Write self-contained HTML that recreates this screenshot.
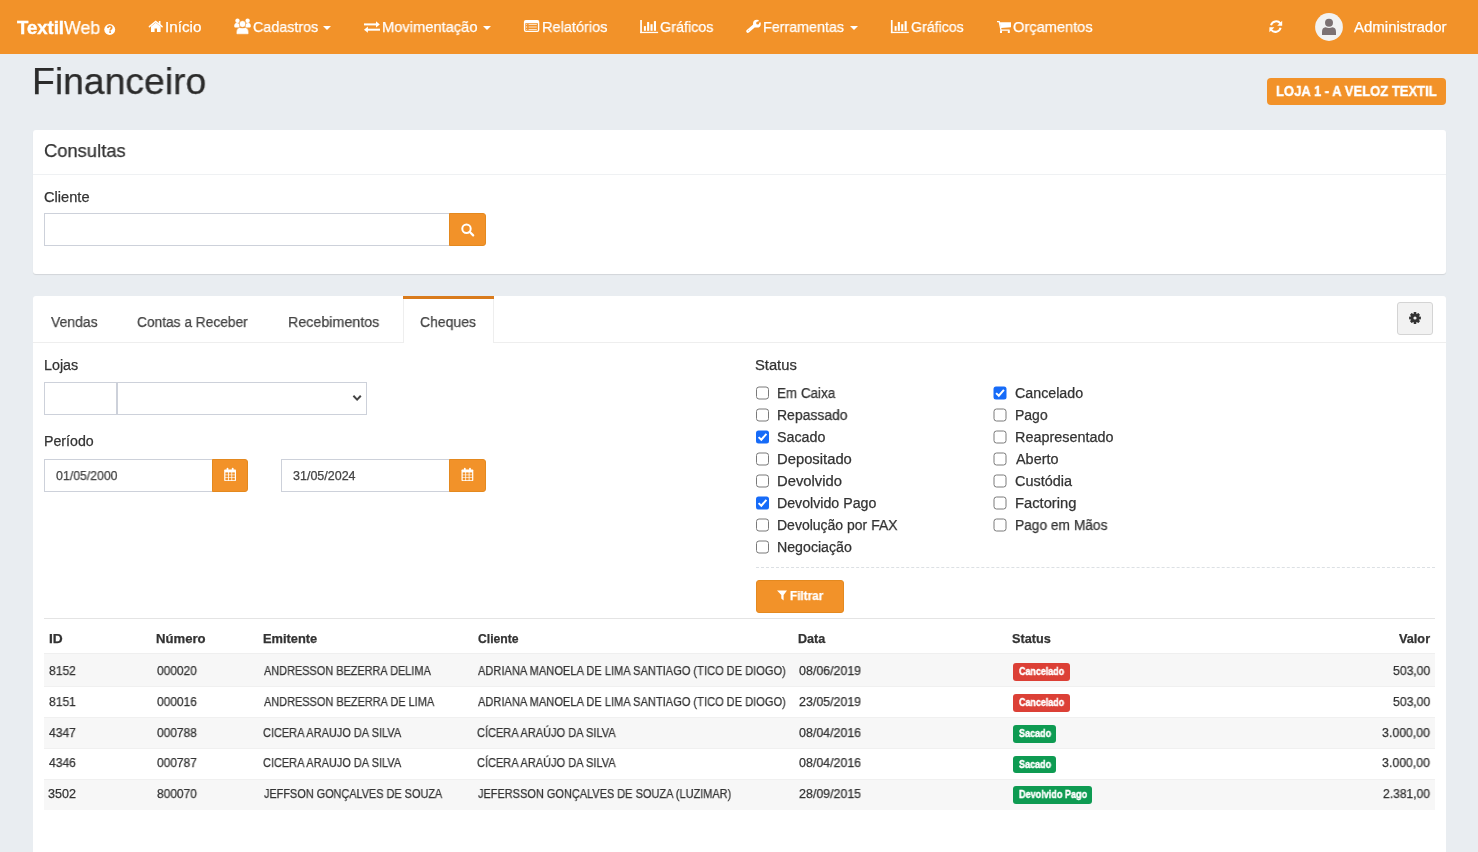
<!DOCTYPE html>
<html><head><meta charset="utf-8"><title>Financeiro</title>
<style>
html,body{margin:0;padding:0}
body{width:1478px;height:852px;overflow:hidden;position:relative;background:#E9EDF1;font-family:"Liberation Sans",sans-serif}
.t{position:absolute;line-height:1;white-space:pre;transform-origin:0 0;font-family:"Liberation Sans",sans-serif;will-change:transform;-webkit-text-stroke:0.25px currentColor}
.b{position:absolute;box-sizing:border-box}
svg{position:absolute;overflow:visible}

</style></head>
<body>
<!-- navbar -->
<div class="b" style="left:0;top:0;width:1478px;height:54px;background:#F29229"></div>
<!-- LOJA badge -->
<div class="b" style="left:1267px;top:78px;width:179px;height:27px;background:#F29229;border-radius:4px"></div>
<!-- panel 1 -->
<div class="b" style="left:33px;top:130px;width:1413px;height:144px;background:#fff;border-radius:3px;box-shadow:0 1px 1px rgba(0,0,0,0.1)"></div>
<div class="b" style="left:33px;top:174px;width:1413px;height:1px;background:#EFF1F3"></div>
<!-- cliente input -->
<div class="b" style="left:44px;top:213px;width:406px;height:33px;border:1px solid #CDD1DA;background:#fff"></div>
<div class="b" style="left:449px;top:213px;width:37px;height:33px;background:#F29229;border:1px solid #E4891F;border-radius:0 3px 3px 0"></div>
<!-- panel 2 -->
<div class="b" style="left:33px;top:296px;width:1413px;height:600px;background:#fff;border-radius:3px"></div>
<div class="b" style="left:33px;top:342px;width:1413px;height:1px;background:#EEEEEE"></div>
<!-- active tab -->
<div class="b" style="left:403px;top:296px;width:91px;height:47px;background:#fff;border-left:1px solid #EEE;border-right:1px solid #EEE"></div>
<div class="b" style="left:403px;top:296px;width:91px;height:3px;background:#D97B1C"></div>
<!-- gear button -->
<div class="b" style="left:1397px;top:302px;width:36px;height:33px;background:#F2F2F2;border:1px solid #D4D4D4;border-radius:3px"></div>
<!-- lojas inputs -->
<div class="b" style="left:44px;top:382px;width:73px;height:33px;border:1px solid #CDD1DA;background:#fff"></div>
<div class="b" style="left:117px;top:382px;width:250px;height:33px;border:1px solid #CDD1DA;background:#fff"></div>
<!-- date inputs -->
<div class="b" style="left:44px;top:459px;width:169px;height:33px;border:1px solid #CDD1DA;background:#fff"></div>
<div class="b" style="left:212px;top:459px;width:36px;height:33px;background:#F29229;border:1px solid #E4891F;border-radius:0 3px 3px 0"></div>
<div class="b" style="left:281px;top:459px;width:169px;height:33px;border:1px solid #CDD1DA;background:#fff"></div>
<div class="b" style="left:449px;top:459px;width:37px;height:33px;background:#F29229;border:1px solid #E4891F;border-radius:0 3px 3px 0"></div>
<!-- dashed line -->
<div class="b" style="left:756px;top:567px;width:679px;height:1px;border-top:1px dashed #DCE0E4"></div>
<!-- filtrar -->
<div class="b" style="left:756px;top:580px;width:88px;height:33px;background:#F29229;border:1px solid #E4891F;border-radius:3px"></div>
<!-- table -->
<div class="b" style="left:44px;top:618px;width:1391px;height:1px;background:#E4E4E4"></div>
<div class="b" style="left:44px;top:653px;width:1391px;height:1px;background:#EFEFEF"></div>
<div class="b" style="left:44px;top:654px;width:1391px;height:32px;background:#F7F7F7"></div>
<div class="b" style="left:44px;top:686px;width:1391px;height:1px;background:#F0F0F0"></div>
<div class="b" style="left:44px;top:717px;width:1391px;height:31px;background:#F7F7F7;border-top:1px solid #F0F0F0"></div>
<div class="b" style="left:44px;top:748px;width:1391px;height:1px;background:#F0F0F0"></div>
<div class="b" style="left:44px;top:779px;width:1391px;height:31px;background:#F7F7F7;border-top:1px solid #F0F0F0"></div>
<!-- badges -->
<div class="b" style="left:1013px;top:663px;width:57px;height:18px;background:#DC4036;border-radius:3px"></div>
<div class="b" style="left:1013px;top:694px;width:57px;height:18px;background:#DC4036;border-radius:3px"></div>
<div class="b" style="left:1013px;top:725px;width:43px;height:18px;background:#0E9B52;border-radius:3px"></div>
<div class="b" style="left:1013px;top:756px;width:43px;height:17px;background:#0E9B52;border-radius:3px"></div>
<div class="b" style="left:1013px;top:786px;width:79px;height:18px;background:#0E9B52;border-radius:3px"></div>
<svg width="1478" height="852" style="left:0;top:0" viewBox="0 0 1478 852">
<!-- question circle -->
<circle cx="109.7" cy="29.5" r="5.45" fill="#fff"/>
<path d="M107.9 28.0 Q107.9 26.1 109.8 26.1 Q111.7 26.1 111.7 27.8 Q111.7 28.7 110.8 29.2 Q110.1 29.7 110.1 30.5" stroke="#F29229" stroke-width="1.7" fill="none"/>
<rect x="109.2" y="31.3" width="1.8" height="1.6" fill="#F29229"/>
<!-- home -->
<path d="M149.4 26.7 L155.7 21.5 L162.1 26.7" stroke="#fff" stroke-width="1.5" fill="none" stroke-linecap="round"/>
<rect x="158.8" y="21" width="1.7" height="3.6" fill="#fff"/>
<path d="M151 26.6 L155.7 22.8 L160.6 26.6 L160.6 32 L157 32 L157 28.5 L154.6 28.5 L154.6 32 L151 32 Z" fill="#fff"/>
<!-- users -->
<g fill="#fff">
<circle cx="237.5" cy="20.8" r="2.2"/>
<circle cx="247.6" cy="20.8" r="2.2"/>
<path d="M234.2 26.4 Q234.1 23.2 236.6 23.1 Q238.2 23.2 239.2 23.9 L239.6 27.4 L236.4 27.6 Q234.3 27.6 234.2 26.4 Z"/>
<path d="M250.8 26.4 Q250.9 23.2 248.4 23.1 Q246.8 23.2 245.8 23.9 L245.4 27.4 L248.6 27.6 Q250.7 27.6 250.8 26.4 Z"/>
<ellipse cx="242.5" cy="24.0" rx="3.2" ry="3.3" stroke="#F29229" stroke-width="0.45"/>
<path d="M236.3 33.2 Q236.2 28.4 239.4 27.5 Q242.5 28.6 245.6 27.5 Q248.8 28.4 248.7 33.2 Q248.7 34.2 247.7 34.2 L237.3 34.2 Q236.3 34.2 236.3 33.2 Z" stroke="#F29229" stroke-width="0.45"/>
</g>
<!-- exchange -->
<rect x="364" y="23.4" width="13" height="2" fill="#fff"/>
<path d="M376 21.2 L379.8 24.4 L376 27.6 Z" fill="#fff"/>
<rect x="367" y="28.7" width="13" height="2" fill="#fff"/>
<path d="M367.9 26.6 L364 29.7 L367.9 32.8 Z" fill="#fff"/>
<!-- list-alt -->
<rect x="524.6" y="20.8" width="14" height="10.6" rx="1.3" fill="none" stroke="#fff" stroke-width="1.4"/>
<rect x="524.6" y="20.8" width="14" height="2.4" fill="#fff"/>
<g fill="#fff" opacity="0.8">
<rect x="526.2" y="24.1" width="0.9" height="0.9"/><rect x="528.6" y="24.1" width="8.2" height="0.9"/>
<rect x="526.2" y="26.2" width="0.9" height="1.6"/><rect x="528.6" y="26.2" width="8.2" height="1.6" opacity="0.6"/>
<rect x="526.2" y="29" width="0.9" height="0.9"/><rect x="528.6" y="29" width="8.2" height="0.9"/>
</g>
<!-- bar chart 1 -->
<g fill="#fff" transform="translate(0 0)">
<rect x="640.2" y="20" width="1.7" height="13.1"/>
<rect x="640.2" y="31.8" width="17.9" height="1.3"/>
<rect x="643.9" y="26.1" width="2" height="4.7"/>
<rect x="647.1" y="22" width="2.1" height="8.8"/>
<rect x="650.5" y="24.2" width="2.1" height="6.6"/>
<rect x="653.9" y="21.1" width="2.1" height="9.7"/>
</g>
<!-- bar chart 2 -->
<g fill="#fff" transform="translate(250.7 0)">
<rect x="640.2" y="20" width="1.7" height="13.1"/>
<rect x="640.2" y="31.8" width="17.9" height="1.3"/>
<rect x="643.9" y="26.1" width="2" height="4.7"/>
<rect x="647.1" y="22" width="2.1" height="8.8"/>
<rect x="650.5" y="24.2" width="2.1" height="6.6"/>
<rect x="653.9" y="21.1" width="2.1" height="9.7"/>
</g>
<!-- wrench -->
<path d="M747.8 31.2 L754.8 25.2" stroke="#fff" stroke-width="3.2" stroke-linecap="round"/>
<circle cx="756.9" cy="23.7" r="3.9" fill="#fff"/>
<path d="M757.6 23.1 L760.1 17.6 L763.4 21.5 Z" fill="#F29229"/>
<circle cx="757.7" cy="23.0" r="1.55" fill="#F29229"/>
<circle cx="748.6" cy="30.6" r="0.5" fill="#F29229" opacity="0.6"/>
<!-- carets -->
<path d="M323 26 L331 26 L327 30 Z" fill="#fff"/>
<path d="M483 26 L491 26 L487 30 Z" fill="#fff"/>
<path d="M850 26 L858 26 L854 30 Z" fill="#fff"/>
<!-- cart -->
<path d="M997 21.6 L999.2 21.6 L1001 30.2 L1009.6 30.2" stroke="#fff" stroke-width="1.3" fill="none"/>
<path d="M999.6 22.2 L1011 22.2 L1011 27.2 L1001 28 Z" fill="#fff"/>
<rect x="1000" y="30.4" width="2" height="2.6" fill="#fff"/>
<rect x="1007.8" y="30.4" width="2" height="2.6" fill="#fff"/>
<!-- refresh --><g transform="translate(0.8 0.7)">
<path d="M1270.2 24.6 A5.4 5.4 0 0 1 1279.6 22.6" stroke="#fff" stroke-width="2" fill="none"/>
<path d="M1281.4 20 L1281.4 25 L1276.4 25 Z" fill="#fff"/>
<path d="M1279.8 27 A5.4 5.4 0 0 1 1270.4 29.2" stroke="#fff" stroke-width="2" fill="none"/>
<path d="M1268.6 31.6 L1268.6 26.6 L1273.6 26.6 Z" fill="#fff"/>
</g><!-- avatar -->
<circle cx="1329" cy="27" r="13.9" fill="#F2F2F2"/>
<circle cx="1329" cy="22.7" r="4" fill="#7B7173"/>
<path d="M1322 35 L1322 32 Q1322 27.5 1325.5 27.2 Q1329 28.6 1332.5 27.2 Q1336 27.5 1336 32 L1336 35 Z" fill="#7B7173"/>
<!-- search -->
<circle cx="466.5" cy="228.7" r="4.2" fill="none" stroke="#fff" stroke-width="2"/>
<path d="M469.6 231.8 L473.2 235.4" stroke="#fff" stroke-width="2.2" stroke-linecap="round"/>
<!-- calendars -->
<g id="cal1">
<rect x="224.2" y="469.4" width="11.8" height="11.6" rx="0.8" fill="#fff"/>
<rect x="226.6" y="467.8" width="1.8" height="2.8" rx="0.9" fill="#fff"/>
<rect x="231.8" y="467.8" width="1.8" height="2.8" rx="0.9" fill="#fff"/>
<g fill="#F29229">
<rect x="225.4" y="472.4" width="2.6" height="2.2"/><rect x="228.8" y="472.4" width="2.6" height="2.2"/><rect x="232.2" y="472.4" width="2.6" height="2.2"/>
<rect x="225.4" y="475.2" width="2.6" height="2.2"/><rect x="228.8" y="475.2" width="2.6" height="2.2"/><rect x="232.2" y="475.2" width="2.6" height="2.2"/>
<rect x="225.4" y="478" width="2.6" height="2.2"/><rect x="228.8" y="478" width="2.6" height="2.2"/><rect x="232.2" y="478" width="2.6" height="2.2"/>
</g>
</g>
<g transform="translate(237.3 0)">
<rect x="224.2" y="469.4" width="11.8" height="11.6" rx="0.8" fill="#fff"/>
<rect x="226.6" y="467.8" width="1.8" height="2.8" rx="0.9" fill="#fff"/>
<rect x="231.8" y="467.8" width="1.8" height="2.8" rx="0.9" fill="#fff"/>
<g fill="#F29229">
<rect x="225.4" y="472.4" width="2.6" height="2.2"/><rect x="228.8" y="472.4" width="2.6" height="2.2"/><rect x="232.2" y="472.4" width="2.6" height="2.2"/>
<rect x="225.4" y="475.2" width="2.6" height="2.2"/><rect x="228.8" y="475.2" width="2.6" height="2.2"/><rect x="232.2" y="475.2" width="2.6" height="2.2"/>
<rect x="225.4" y="478" width="2.6" height="2.2"/><rect x="228.8" y="478" width="2.6" height="2.2"/><rect x="232.2" y="478" width="2.6" height="2.2"/>
</g>
</g>
<!-- select chevron -->
<path d="M353.4 395.8 L357.1 399.6 L360.8 395.8" stroke="#444" stroke-width="2" fill="none"/>
<!-- gear -->
<g transform="translate(1415 318)">
<g fill="#333">
<rect x="-1.4" y="-5.9" width="2.8" height="11.8" rx="0.6"/>
<rect x="-1.4" y="-5.9" width="2.8" height="11.8" rx="0.6" transform="rotate(45)"/>
<rect x="-1.4" y="-5.9" width="2.8" height="11.8" rx="0.6" transform="rotate(90)"/>
<rect x="-1.4" y="-5.9" width="2.8" height="11.8" rx="0.6" transform="rotate(135)"/>
<circle r="4.2"/>
</g>
<circle r="1.6" fill="#F2F2F2"/>
</g>
<!-- funnel -->
<path d="M777 590.4 L787 590.4 L783.6 595 L783.6 600.6 L781.3 598.6 L781.3 595 Z" fill="#fff"/>
</svg>
<svg width="1478" height="852" style="left:0;top:0" viewBox="0 0 1478 852">
<rect x="756.5" y="387.0" width="12" height="12" rx="2.5" fill="#fff" stroke="#7A7A7A" stroke-width="1"/>
<rect x="756.5" y="409.0" width="12" height="12" rx="2.5" fill="#fff" stroke="#7A7A7A" stroke-width="1"/>
<rect x="756" y="430.5" width="13" height="13" rx="2.5" fill="#166BF8"/>
<path d="M758.6 437.1 L761.3 439.7 L766.4 433.9" stroke="#fff" stroke-width="2" fill="none"/>
<rect x="756.5" y="453.0" width="12" height="12" rx="2.5" fill="#fff" stroke="#7A7A7A" stroke-width="1"/>
<rect x="756.5" y="475.0" width="12" height="12" rx="2.5" fill="#fff" stroke="#7A7A7A" stroke-width="1"/>
<rect x="756" y="496.5" width="13" height="13" rx="2.5" fill="#166BF8"/>
<path d="M758.6 503.1 L761.3 505.7 L766.4 499.9" stroke="#fff" stroke-width="2" fill="none"/>
<rect x="756.5" y="519.0" width="12" height="12" rx="2.5" fill="#fff" stroke="#7A7A7A" stroke-width="1"/>
<rect x="756.5" y="541.0" width="12" height="12" rx="2.5" fill="#fff" stroke="#7A7A7A" stroke-width="1"/>
<rect x="993.5" y="386.5" width="13" height="13" rx="2.5" fill="#166BF8"/>
<path d="M996.1 393.1 L998.8 395.7 L1003.9 389.9" stroke="#fff" stroke-width="2" fill="none"/>
<rect x="994.0" y="409.0" width="12" height="12" rx="2.5" fill="#fff" stroke="#7A7A7A" stroke-width="1"/>
<rect x="994.0" y="431.0" width="12" height="12" rx="2.5" fill="#fff" stroke="#7A7A7A" stroke-width="1"/>
<rect x="994.0" y="453.0" width="12" height="12" rx="2.5" fill="#fff" stroke="#7A7A7A" stroke-width="1"/>
<rect x="994.0" y="475.0" width="12" height="12" rx="2.5" fill="#fff" stroke="#7A7A7A" stroke-width="1"/>
<rect x="994.0" y="497.0" width="12" height="12" rx="2.5" fill="#fff" stroke="#7A7A7A" stroke-width="1"/>
<rect x="994.0" y="519.0" width="12" height="12" rx="2.5" fill="#fff" stroke="#7A7A7A" stroke-width="1"/>
</svg>
<div class="t" style="left:17.00px;top:19.00px;font-size:18.0px;font-weight:700;color:#ffffff;transform:scaleX(1.0289);-webkit-text-stroke:0.4px #fff;">Textil</div>
<div class="t" style="left:64.00px;top:19.00px;font-size:18.0px;font-weight:400;color:#ffffff;transform:scaleX(0.9833);">Web</div>
<div class="t" style="left:165.49px;top:19.00px;font-size:15.0px;font-weight:400;color:#ffffff;transform:scaleX(1.0147);">Início</div>
<div class="t" style="left:253.04px;top:19.00px;font-size:15.0px;font-weight:400;color:#ffffff;transform:scaleX(0.9552);">Cadastros</div>
<div class="t" style="left:382.02px;top:19.00px;font-size:15.0px;font-weight:400;color:#ffffff;transform:scaleX(0.9792);">Movimentação</div>
<div class="t" style="left:542.03px;top:19.00px;font-size:15.0px;font-weight:400;color:#ffffff;transform:scaleX(0.9697);">Relatórios</div>
<div class="t" style="left:660.04px;top:19.00px;font-size:15.0px;font-weight:400;color:#ffffff;transform:scaleX(0.9574);">Gráficos</div>
<div class="t" style="left:763.05px;top:19.00px;font-size:15.0px;font-weight:400;color:#ffffff;transform:scaleX(0.9524);">Ferramentas</div>
<div class="t" style="left:911.06px;top:19.00px;font-size:15.0px;font-weight:400;color:#ffffff;transform:scaleX(0.9444);">Gráficos</div>
<div class="t" style="left:1013.02px;top:19.00px;font-size:15.0px;font-weight:400;color:#ffffff;transform:scaleX(0.9750);">Orçamentos</div>
<div class="t" style="left:1354.00px;top:19.00px;font-size:15.0px;font-weight:400;color:#ffffff;transform:scaleX(1.0000);">Administrador</div>
<div class="t" style="left:32.41px;top:63.00px;font-size:37.5px;font-weight:400;color:#2b2b2b;transform:scaleX(0.9953);">Financeiro</div>
<div class="t" style="left:1275.60px;top:84.00px;font-size:14.5px;font-weight:700;color:#ffffff;transform:scaleX(0.8983);-webkit-text-stroke:0.4px #fff;">LOJA 1 - A VELOZ TEXTIL</div>
<div class="t" style="left:43.83px;top:141.00px;font-size:19.0px;font-weight:400;color:#333333;transform:scaleX(0.9663);">Consultas</div>
<div class="t" style="left:43.75px;top:190.00px;font-size:14.0px;font-weight:400;color:#333333;transform:scaleX(1.0452);">Cliente</div>
<div class="t" style="left:50.60px;top:314.30px;font-size:15.5px;font-weight:400;color:#444;transform:scaleX(0.9020);">Vendas</div>
<div class="t" style="left:137.11px;top:314.00px;font-size:15.5px;font-weight:400;color:#444;transform:scaleX(0.8863);">Contas a Receber</div>
<div class="t" style="left:288.28px;top:314.00px;font-size:15.5px;font-weight:400;color:#444;transform:scaleX(0.9214);">Recebimentos</div>
<div class="t" style="left:420.10px;top:314.30px;font-size:15.5px;font-weight:400;color:#444;transform:scaleX(0.9016);">Cheques</div>
<div class="t" style="left:43.78px;top:357.50px;font-size:14.0px;font-weight:400;color:#333333;transform:scaleX(1.0219);">Lojas</div>
<div class="t" style="left:43.79px;top:434.30px;font-size:14.0px;font-weight:400;color:#333333;transform:scaleX(1.0146);">Período</div>
<div class="t" style="left:56.30px;top:470.00px;font-size:12.5px;font-weight:400;color:#444;transform:scaleX(0.9839);">01/05/2000</div>
<div class="t" style="left:292.50px;top:470.00px;font-size:12.5px;font-weight:400;color:#444;transform:scaleX(1.0000);">31/05/2024</div>
<div class="t" style="left:755.45px;top:358.00px;font-size:14.0px;font-weight:400;color:#333333;transform:scaleX(1.0526);">Status</div>
<div class="t" style="left:777.44px;top:385.90px;font-size:14.0px;font-weight:400;color:#333333;transform:scaleX(0.9583);">Em Caixa</div>
<div class="t" style="left:777.40px;top:407.90px;font-size:14.0px;font-weight:400;color:#333333;transform:scaleX(0.9957);">Repassado</div>
<div class="t" style="left:777.38px;top:429.90px;font-size:14.0px;font-weight:400;color:#333333;transform:scaleX(1.0196);">Sacado</div>
<div class="t" style="left:777.34px;top:451.90px;font-size:14.0px;font-weight:400;color:#333333;transform:scaleX(1.0565);">Depositado</div>
<div class="t" style="left:777.34px;top:473.90px;font-size:14.0px;font-weight:400;color:#333333;transform:scaleX(1.0567);">Devolvido</div>
<div class="t" style="left:777.39px;top:495.90px;font-size:14.0px;font-weight:400;color:#333333;transform:scaleX(1.0124);">Devolvido Pago</div>
<div class="t" style="left:777.40px;top:517.90px;font-size:14.0px;font-weight:400;color:#333333;transform:scaleX(0.9992);">Devolução por FAX</div>
<div class="t" style="left:777.39px;top:539.90px;font-size:14.0px;font-weight:400;color:#333333;transform:scaleX(1.0123);">Negociação</div>
<div class="t" style="left:1014.68px;top:385.90px;font-size:14.0px;font-weight:400;color:#333333;transform:scaleX(1.0182);">Cancelado</div>
<div class="t" style="left:1014.70px;top:407.90px;font-size:14.0px;font-weight:400;color:#333333;transform:scaleX(0.9968);">Pago</div>
<div class="t" style="left:1014.67px;top:429.90px;font-size:14.0px;font-weight:400;color:#333333;transform:scaleX(1.0277);">Reapresentado</div>
<div class="t" style="left:1015.70px;top:451.90px;font-size:14.0px;font-weight:400;color:#333333;transform:scaleX(1.0293);">Aberto</div>
<div class="t" style="left:1014.67px;top:473.90px;font-size:14.0px;font-weight:400;color:#333333;transform:scaleX(1.0315);">Custódia</div>
<div class="t" style="left:1014.65px;top:495.90px;font-size:14.0px;font-weight:400;color:#333333;transform:scaleX(1.0526);">Factoring</div>
<div class="t" style="left:1014.72px;top:517.90px;font-size:14.0px;font-weight:400;color:#333333;transform:scaleX(0.9817);">Pago em Mãos</div>
<div class="t" style="left:789.66px;top:589.70px;font-size:12.5px;font-weight:700;color:#ffffff;transform:scaleX(0.9412);">Filtrar</div>
<div class="t" style="left:48.75px;top:633.00px;font-size:12.0px;font-weight:700;color:#333333;transform:scaleX(1.1455);">ID</div>
<div class="t" style="left:155.81px;top:633.00px;font-size:12.0px;font-weight:700;color:#333333;transform:scaleX(1.0932);">Número</div>
<div class="t" style="left:262.83px;top:633.00px;font-size:12.0px;font-weight:700;color:#333333;transform:scaleX(1.0694);">Emitente</div>
<div class="t" style="left:477.60px;top:633.00px;font-size:12.0px;font-weight:700;color:#333333;transform:scaleX(1.0150);">Cliente</div>
<div class="t" style="left:797.75px;top:633.00px;font-size:12.0px;font-weight:700;color:#333333;transform:scaleX(1.0480);">Data</div>
<div class="t" style="left:1011.55px;top:633.00px;font-size:12.0px;font-weight:700;color:#333333;transform:scaleX(1.0543);">Status</div>
<div class="t" style="left:1399.00px;top:633.00px;font-size:12.0px;font-weight:700;color:#333333;transform:scaleX(1.0586);">Valor</div>
<div class="t" style="left:49.40px;top:665.00px;font-size:12.5px;font-weight:400;color:#333333;transform:scaleX(0.9667);">8152</div>
<div class="t" style="left:156.50px;top:665.00px;font-size:12.5px;font-weight:400;color:#333333;transform:scaleX(0.9561);">000020</div>
<div class="t" style="left:263.90px;top:665.00px;font-size:12.5px;font-weight:400;color:#333333;transform:scaleX(0.8733);">ANDRESSON BEZERRA DELIMA</div>
<div class="t" style="left:477.80px;top:665.00px;font-size:12.5px;font-weight:400;color:#333333;transform:scaleX(0.8862);">ADRIANA MANOELA DE LIMA SANTIAGO (TICO DE DIOGO)</div>
<div class="t" style="left:798.80px;top:665.00px;font-size:12.5px;font-weight:400;color:#333333;transform:scaleX(0.9919);">08/06/2019</div>
<div class="t" style="left:1018.90px;top:667.00px;font-size:10.0px;font-weight:700;color:#ffffff;transform:scaleX(0.8920);-webkit-text-stroke:0.4px #fff;">Cancelado</div>
<div class="t" style="left:1392.62px;top:665.00px;font-size:12.5px;font-weight:400;color:#333333;transform:scaleX(0.9757);">503,00</div>
<div class="t" style="left:49.40px;top:695.80px;font-size:12.5px;font-weight:400;color:#333333;transform:scaleX(0.9667);">8151</div>
<div class="t" style="left:156.50px;top:695.80px;font-size:12.5px;font-weight:400;color:#333333;transform:scaleX(0.9561);">000016</div>
<div class="t" style="left:263.90px;top:695.80px;font-size:12.5px;font-weight:400;color:#333333;transform:scaleX(0.8747);">ANDRESSON BEZERRA DE LIMA</div>
<div class="t" style="left:477.80px;top:695.80px;font-size:12.5px;font-weight:400;color:#333333;transform:scaleX(0.8862);">ADRIANA MANOELA DE LIMA SANTIAGO (TICO DE DIOGO)</div>
<div class="t" style="left:798.80px;top:695.80px;font-size:12.5px;font-weight:400;color:#333333;transform:scaleX(0.9919);">23/05/2019</div>
<div class="t" style="left:1018.90px;top:697.80px;font-size:10.0px;font-weight:700;color:#ffffff;transform:scaleX(0.8920);-webkit-text-stroke:0.4px #fff;">Cancelado</div>
<div class="t" style="left:1392.62px;top:695.80px;font-size:12.5px;font-weight:400;color:#333333;transform:scaleX(0.9757);">503,00</div>
<div class="t" style="left:49.40px;top:726.50px;font-size:12.5px;font-weight:400;color:#333333;transform:scaleX(0.9667);">4347</div>
<div class="t" style="left:156.50px;top:726.50px;font-size:12.5px;font-weight:400;color:#333333;transform:scaleX(0.9561);">000788</div>
<div class="t" style="left:263.02px;top:726.50px;font-size:12.5px;font-weight:400;color:#333333;transform:scaleX(0.8782);">CICERA ARAUJO DA SILVA</div>
<div class="t" style="left:476.92px;top:726.50px;font-size:12.5px;font-weight:400;color:#333333;transform:scaleX(0.8814);">CÍCERA ARAÚJO DA SILVA</div>
<div class="t" style="left:798.80px;top:726.50px;font-size:12.5px;font-weight:400;color:#333333;transform:scaleX(0.9919);">08/04/2016</div>
<div class="t" style="left:1018.90px;top:728.50px;font-size:10.0px;font-weight:700;color:#ffffff;transform:scaleX(0.9029);-webkit-text-stroke:0.4px #fff;">Sacado</div>
<div class="t" style="left:1382.41px;top:726.50px;font-size:12.5px;font-weight:400;color:#333333;transform:scaleX(0.9851);">3.000,00</div>
<div class="t" style="left:49.40px;top:757.20px;font-size:12.5px;font-weight:400;color:#333333;transform:scaleX(0.9667);">4346</div>
<div class="t" style="left:156.50px;top:757.20px;font-size:12.5px;font-weight:400;color:#333333;transform:scaleX(0.9561);">000787</div>
<div class="t" style="left:263.02px;top:757.20px;font-size:12.5px;font-weight:400;color:#333333;transform:scaleX(0.8782);">CICERA ARAUJO DA SILVA</div>
<div class="t" style="left:476.92px;top:757.20px;font-size:12.5px;font-weight:400;color:#333333;transform:scaleX(0.8814);">CÍCERA ARAÚJO DA SILVA</div>
<div class="t" style="left:798.80px;top:757.20px;font-size:12.5px;font-weight:400;color:#333333;transform:scaleX(0.9919);">08/04/2016</div>
<div class="t" style="left:1018.90px;top:759.90px;font-size:10.0px;font-weight:700;color:#ffffff;transform:scaleX(0.9029);-webkit-text-stroke:0.4px #fff;">Sacado</div>
<div class="t" style="left:1382.41px;top:757.20px;font-size:12.5px;font-weight:400;color:#333333;transform:scaleX(0.9851);">3.000,00</div>
<div class="t" style="left:48.40px;top:788.10px;font-size:12.5px;font-weight:400;color:#333333;transform:scaleX(1.0038);">3502</div>
<div class="t" style="left:156.50px;top:788.10px;font-size:12.5px;font-weight:400;color:#333333;transform:scaleX(0.9561);">800070</div>
<div class="t" style="left:263.90px;top:788.10px;font-size:12.5px;font-weight:400;color:#333333;transform:scaleX(0.8706);">JEFFSON GONÇALVES DE SOUZA</div>
<div class="t" style="left:477.80px;top:788.10px;font-size:12.5px;font-weight:400;color:#333333;transform:scaleX(0.8771);">JEFERSSON GONÇALVES DE SOUZA (LUZIMAR)</div>
<div class="t" style="left:798.80px;top:788.10px;font-size:12.5px;font-weight:400;color:#333333;transform:scaleX(0.9919);">28/09/2015</div>
<div class="t" style="left:1018.90px;top:790.10px;font-size:10.0px;font-weight:700;color:#ffffff;transform:scaleX(0.9080);-webkit-text-stroke:0.4px #fff;">Devolvido Pago</div>
<div class="t" style="left:1383.40px;top:788.10px;font-size:12.5px;font-weight:400;color:#333333;transform:scaleX(0.9646);">2.381,00</div>
</body></html>
